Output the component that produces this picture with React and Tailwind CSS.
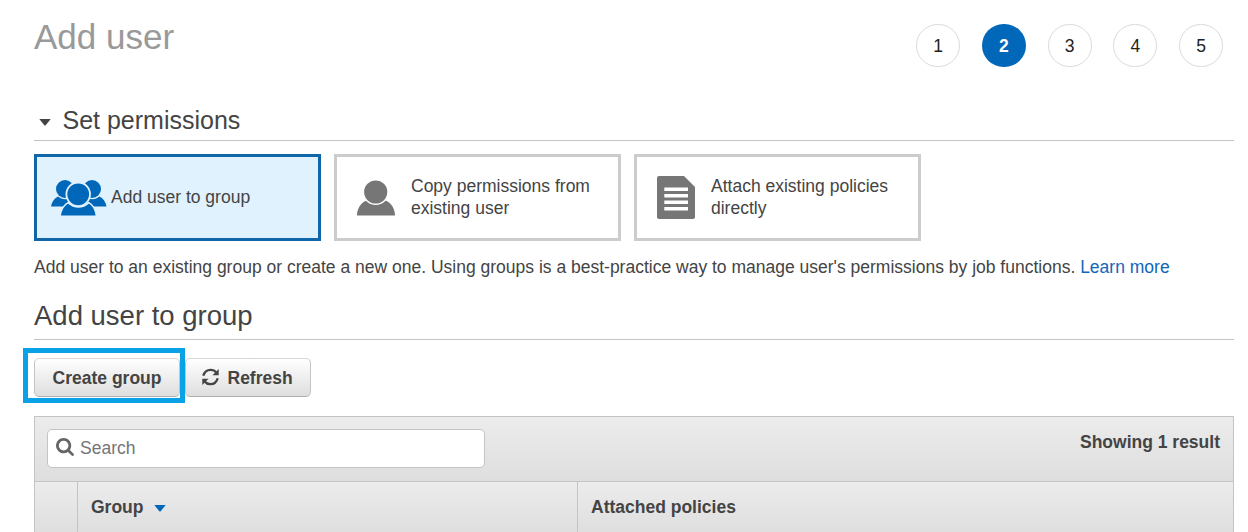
const STEPS = [1, 2, 3, 4, 5];

function GroupIcon() {
  return (
    <svg className="h-[38px] w-[56px] shrink-0" viewBox="0 0 56 38" fill="#0067b9">
      <circle cx="14" cy="10" r="9" />
      <circle cx="41" cy="10" r="9" />
      <path d="M0 27.5C0.6 23.5 3 19.6 7 17.6C11 21 17 21 21 17.6V27.5Z" />
      <path d="M55.5 27.5C54.9 23.5 52.5 19.6 48.5 17.6C44.500 21 38.500 21 34.500 17.6V27.500Z" />
      <path d="M9 37.200C10 30 13.500 25.500 17.200 23.600C23.500 29.500 31.500 29.500 37.800 23.600C41.500 25.500 44.500 30 45.500 37.200Z" stroke="#e1f2ff" strokeWidth="1.600" />
      <circle cx="27.200" cy="15.300" r="11.800" stroke="#e1f2ff" strokeWidth="1.800" />
    </svg>
  );
}

function UserIcon() {
  return (
    <svg className="h-[36px] w-[38px] shrink-0" viewBox="0 0 38 36" fill="#767676">
      <path d="M0 35.500C0 28.500 4 22.300 10 20.500C15 25.500 23 25.500 28 20.500C34 22.300 38 28.500 38 35.500Z" />
      <circle cx="18.700" cy="12" r="12.300" stroke="#fff" strokeWidth="1.400" />
    </svg>
  );
}

function DocumentIcon() {
  return (
    <svg className="h-[43px] w-[38px] shrink-0" viewBox="0 0 38 43">
      <path d="M2 0H27L38 11V41Q38 43 36 43H2Q0 43 0 41V2Q0 0 2 0Z" fill="#767676" />
      <path d="M7.300 13.200H31M7.300 19.700H31M7.300 26.200H31M7.300 32.700H31" stroke="#fff" strokeWidth="3.400" />
    </svg>
  );
}

function RefreshIcon() {
  return (
    <svg className="mb-[3px] h-[18px] w-[17px] shrink-0" viewBox="0 0 17 18" fill="none">
      <path d="M1.300 7.800C2.500 3.400 6 1.700 9 1.800C11.300 1.900 13 2.800 14.300 4.500M15.700 10.200C14.500 14.600 11 16.300 8 16.200C5.700 16.100 4 15.200 2.700 13.500" stroke="#444" strokeWidth="2.300" />
      <path d="M16.700 1V7.200H10.500ZM0.300 17V10.800H6.500Z" fill="#444" />
    </svg>
  );
}

function SearchIcon() {
  return (
    <svg className="mb-[3px] h-[18px] w-[18px] shrink-0" viewBox="0 0 1664 1664" fill="#666">
      <path d="M1152 704q0-185-131.500-316.500T704 256 387.500 387.500 256 704t131.500 316.500T704 1152t316.500-131.500T1152 704zm512 832q0 52-38 90t-90 38q-54 0-90-38l-343-342q-179 124-399 124-143 0-273.500-55.500t-225-150-150-225T0 704t55.500-273.500 150-225 225-150T704 0t273.500 55.500 225 150 150 225T1408 704q0 220-124 399l343 343q37 37 37 90z" />
    </svg>
  );
}

function Caret({ className }) {
  return (
    <svg className={className} viewBox="0 0 12 7" fill="currentColor">
      <path d="M0.300 0H11.700L6.700 6.200Q6 7 5.300 6.200Z" />
    </svg>
  );
}

export default function App() {
  return (
    <div className="h-[532px] w-[1248px] overflow-hidden bg-white pr-[14px] pl-[34px] font-['Liberation_Sans',Arial,sans-serif] text-[17.500px] text-[#444]">
      <header className="flex h-[100px] justify-between pr-[11px]">
        <h1 className="pt-[17px] text-[35px] leading-[40px] whitespace-nowrap text-[#999]">Add user</h1>
        <ol className="flex gap-[21.750px] pt-6">
          {STEPS.map((n) => (
            <li
              key={n}
              className={
                n === 2
                  ? "flex h-[43px] w-11 items-center justify-center rounded-full bg-[#0067b9] pt-px font-bold text-white"
                  : "flex h-[43px] w-11 items-center justify-center rounded-full border border-[#dadada] pt-px text-[#222]"
              }
            >
              {n}
            </li>
          ))}
        </ol>
      </header>

      <h2 className="flex h-[41px] items-center border-b border-[#c4c4c4] pl-[5px] text-[25px] leading-[40px] whitespace-nowrap">
        <Caret className="mt-1 mr-[11.500px] h-[7px] w-3" />
        Set permissions
      </h2>

      <div className="mt-[13px] flex gap-[13px] leading-[22px]">
        <button className="flex h-[87px] w-[287px] items-center border-[3px] border-[#1166a8] bg-[#e1f2ff] pl-[14px] text-left">
          <GroupIcon />
          <span className="pb-[2px] pl-1 whitespace-nowrap">Add user to group</span>
        </button>
        <button className="flex h-[87px] w-[287px] items-center border-[3px] border-[#ccc] pl-5 text-left">
          <UserIcon />
          <span className="pb-[2px] pl-4 whitespace-nowrap">Copy permissions from<br />existing user</span>
        </button>
        <button className="flex h-[87px] w-[287px] items-center border-[3px] border-[#ccc] pl-5 text-left">
          <DocumentIcon />
          <span className="pb-[2px] pl-4 whitespace-nowrap">Attach existing policies<br />directly</span>
        </button>
      </div>

      <p className="mt-[15px] h-[22px] leading-[22px] whitespace-nowrap">
        Add user to an existing group or create a new one. Using groups is a best-practice way to manage user's permissions by job functions.{" "}
        <a className="text-[#1166bb]">Learn more</a>
      </p>

      <h2 className="mt-[17px] h-[45px] border-b border-[#c4c4c4] pt-px text-[27.500px] leading-[40px] whitespace-nowrap">Add user to group</h2>

      <div className="mt-[18px] flex h-[39px] gap-[5px] font-bold whitespace-nowrap">
        <div className="relative">
          <button className="h-[39px] w-[146px] rounded-[5px] border border-[#c4c4c4] border-t-[#d8d8d8] border-b-[#b0b0b0] bg-linear-to-b from-white to-[#dedede] pt-px">Create group</button>
          <div className="pointer-events-none absolute -top-[10px] -left-[11px] h-[55px] w-[162px] border-[5px] border-[#0aa2e6]" />
        </div>
        <button className="flex h-[39px] w-[126px] items-center gap-[9px] rounded-[5px] border border-[#c4c4c4] border-t-[#d8d8d8] border-b-[#b0b0b0] bg-linear-to-b from-white to-[#dedede] pt-px pl-[15.500px]">
          <RefreshIcon />
          Refresh
        </button>
      </div>

      <section className="mt-[19px] border border-[#c4c4c4]">
        <div className="flex h-[65px] justify-between border-b border-[#c4c4c4] bg-linear-to-b from-[#ececec] to-[#dedede] px-3 pt-3">
          <div className="flex h-[39px] w-[438px] items-center gap-1.5 rounded-[5px] border border-[#c4c4c4] bg-white pl-2 text-[#757575]">
            <SearchIcon />
            Search
          </div>
          <span className="pr-px font-bold whitespace-nowrap">Showing 1 result</span>
        </div>
        <div className="grid h-[60px] grid-cols-[43px_500px_1fr] bg-linear-to-b from-[#ececec] to-[#dcdcdc] leading-[50px] font-bold">
          <div className="border-r border-[#c4c4c4]" />
          <div className="flex h-[60px] border-r border-[#c4c4c4] pl-[13px]">
            Group
            <Caret className="mt-[23px] ml-[10px] h-[7px] w-3 text-[#0067b9]" />
          </div>
          <div className="pl-[13px]">Attached policies</div>
        </div>
      </section>
    </div>
  );
}
